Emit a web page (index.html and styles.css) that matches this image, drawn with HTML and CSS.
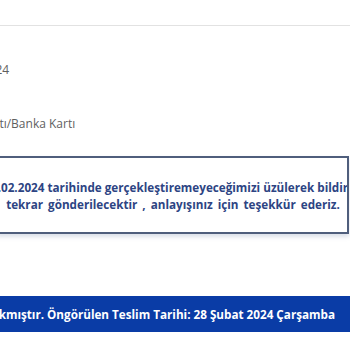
FILE: index.html
```html
<!DOCTYPE html>
<html lang="tr">
<head>
    <meta charset="UTF-8">
    <meta name="viewport" content="width=device-width, initial-scale=1.0">
    <title>Sipariş Detayı</title>
    <link rel="stylesheet" href="styles.css">
</head>
<body>
    <header class="top-bar"></header>

    <section class="order-info">
        <div class="info-row">
            <span class="info-label">Sipariş Tarihi</span>
            <span class="info-value">20.02.2024</span>
        </div>
        <div class="info-row">
            <span class="info-label">Ödeme Yöntemi</span>
            <span class="info-value">Kredi Kartı/Banka Kartı</span>
        </div>
    </section>

    <div class="notice">
        <p class="notice-line first"><span class="cut">Siparişinizin teslimatını 21.</span>02.2024 tarihinde gerçekleştiremeyeceğimizi üzülerek bildiririz.</p>
        <p class="notice-line second">tekrar gönderilecektir , anlayışınız için teşekkür ederiz.</p>
    </div>

    <div class="status-bar">
        <span class="status-text">Siparişiniz kargoya çıkmıştır. Öngörülen Teslim Tarihi: 28 Şubat 2024 Çarşamba</span>
    </div>
</body>
</html>
```

FILE: styles.css
```css
/* 重置樣式 */
* {
    margin: 0;
    padding: 0;
    box-sizing: border-box;
}

body {
    font-family: 'Open Sans', 'Noto Sans', Arial, sans-serif;
    background-color: #ffffff;
    overflow: hidden;
}

/* 頂部 */
.top-bar {
    height: 26px;
    border-bottom: 1px solid #e2e2e2;
}

/* 訂單資訊 */
.order-info {
    padding-top: 16px;
    margin-left: -252px;
}

.info-row {
    display: flex;
    align-items: center;
    height: 54px;
    font-size: 12px;
    color: #5f5f5f;
}

.info-label {
    width: 200px;
    flex-shrink: 0;
}

.info-value {
    white-space: nowrap;
}

/* 提示框 */
.notice {
    margin: 6px 0 0 -3px;
    width: 352px;
    border: 2px solid #4f5e7c;
    background-color: #ffffff;
    box-shadow: 0 3px 4px rgba(120, 135, 170, 0.25);
    padding: 21px 1px 19px;
    overflow: hidden;
    color: #2d4483;
    font-size: 11.7px;
    font-weight: bold;
    line-height: 17px;
}

.notice-line {
    text-align: center;
    white-space: nowrap;
}

.notice-line.first {
    text-align: left;
    padding-left: 1px;
}

.notice-line.second {
    word-spacing: 2px;
}

.cut {
    display: inline-block;
    width: 300px;
    margin-left: -300px;
    text-align: right;
}

/* 狀態列 */
.status-bar {
    margin-top: 62px;
    height: 36px;
    display: flex;
    align-items: center;
    justify-content: flex-end;
    padding-right: 15px;
    background-color: #0a3ca6;
    color: #ffffff;
    font-size: 11.7px;
    font-weight: bold;
}

.status-text {
    white-space: nowrap;
    flex-shrink: 0;
}
```
